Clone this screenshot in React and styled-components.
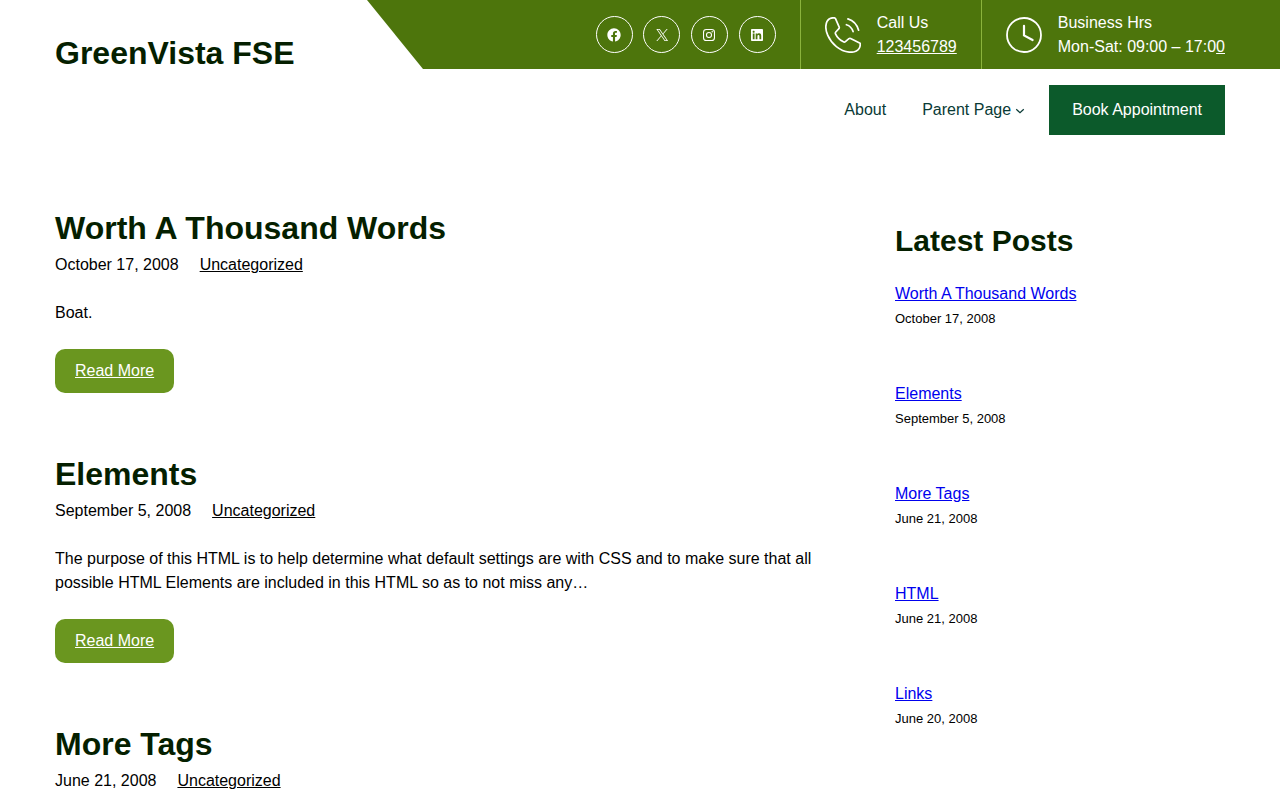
import styled, { createGlobalStyle } from 'styled-components';

const socials = ['Facebook', 'X', 'Instagram', 'LinkedIn'];

const posts = [
	{ title: 'Worth A Thousand Words', date: 'October 17, 2008', text: 'Boat.' },
	{
		title: 'Elements',
		date: 'September 5, 2008',
		text: 'The purpose of this HTML is to help determine what default settings are with CSS and to make sure that all possible HTML Elements are included in this HTML so as to not miss any…',
	},
	{ title: 'More Tags', date: 'June 21, 2008', text: '' },
];

const latest = [
	{ title: 'Worth A Thousand Words', date: 'October 17, 2008' },
	{ title: 'Elements', date: 'September 5, 2008' },
	{ title: 'More Tags', date: 'June 21, 2008' },
	{ title: 'HTML', date: 'June 21, 2008' },
	{ title: 'Links', date: 'June 20, 2008' },
];

function SocialIcon({ name }) {
	return (
		<svg width="16" height="16" viewBox="0 0 24 24" fill="currentColor" aria-hidden="true">
			{name === 'Facebook' && (
				<path d="M12 2C6.5 2 2 6.5 2 12c0 5 3.7 9.1 8.4 9.9v-7H7.9V12h2.5V9.8c0-2.5 1.5-3.9 3.8-3.9 1.1 0 2.2.2 2.2.2v2.5h-1.3c-1.2 0-1.6.8-1.6 1.6V12h2.8l-.4 2.9h-2.3v7C18.3 21.1 22 17 22 12c0-5.5-4.5-10-10-10z" />
			)}
			{name === 'X' && (
				<path d="M13.982 10.622 20.54 3h-1.554l-5.693 6.618L8.745 3H3.5l6.876 10.007L3.5 21h1.554l6.012-6.989L15.868 21h5.245l-7.131-10.378Zm-2.128 2.474-.697-.997-5.543-7.93H8l4.474 6.4.697.996 5.815 8.318h-2.387l-4.745-6.787Z" />
			)}
			{name === 'Instagram' && (
				<g>
					<rect x="3.8" y="3.8" width="16.4" height="16.4" rx="4.2" fill="none" stroke="currentColor" strokeWidth="1.6" />
					<circle cx="12" cy="12" r="3.8" fill="none" stroke="currentColor" strokeWidth="1.6" />
					<circle cx="16.8" cy="7.2" r="1.1" />
				</g>
			)}
			{name === 'LinkedIn' && (
				<path d="M19.7,3H4.3C3.582,3,3,3.582,3,4.3v15.4C3,20.418,3.582,21,4.3,21h15.4c0.718,0,1.3-0.582,1.3-1.3V4.3C21,3.582,20.418,3,19.7,3z M8.339,18.338H5.667v-8.59h2.672V18.338z M7.004,8.574c-0.857,0-1.549-0.694-1.549-1.548c0-0.855,0.691-1.548,1.549-1.548c0.854,0,1.547,0.694,1.547,1.548C8.551,7.881,7.858,8.574,7.004,8.574z M18.339,18.338h-2.669v-4.177c0-0.996-0.017-2.278-1.387-2.278c-1.389,0-1.601,1.086-1.601,2.206v4.249h-2.667v-8.59h2.559v1.174h0.037c0.356-0.675,1.227-1.387,2.526-1.387c2.703,0,3.203,1.779,3.203,4.092V18.338z" />
			)}
		</svg>
	);
}

function PhoneIcon() {
	return (
		<svg width="36" height="36" viewBox="0 0 36 36" fill="none" stroke="#fff" strokeWidth="1.7" strokeLinecap="round" strokeLinejoin="round" aria-hidden="true">
			<path d="M9.400.9C6.400.5 3.400 1.800 1.900 4.600.4 8 .6 13.400 2.800 18.400 6.600 27 14.800 34.200 24.200 35.100c4.200.4 8.200-1 10-3.700.9-1.400 1.200-3.200.9-5.200L25.600 21.500c-.6-.3-1.200-.2-1.700.2l-3.500 2.900c-.6.5-1.300.6-2 .2C14.800 23 12 20.200 10.500 16.900c-.3-.7-.2-1.300.3-1.900l3.100-3.300c.4-.5.5-1 .3-1.600L10.500 1.700C10.300 1.200 9.900 1 9.400.9z" />
			<path d="M21.400 7.700c3.200.9 5.600 3.400 6.700 6.900M22.900 1.900c5.300 1.600 9.100 5.800 10.700 11.300" />
		</svg>
	);
}

function ClockIcon() {
	return (
		<svg width="36" height="36" viewBox="0 0 36 36" fill="none" stroke="#fff" strokeWidth="1.8" strokeLinecap="round" aria-hidden="true">
			<circle cx="18" cy="18" r="17" />
			<path strokeWidth="2.2" d="M18 8.800v9.600l8.600 4.600" />
		</svg>
	);
}

function App() {
	return (
		<>
			<GlobalStyle />
			<Header>
				<SiteTitle>GreenVista FSE</SiteTitle>
				<HeaderRight>
					<TopBar>
						<Socials>
							{socials.map((name) => (
								<SocialLink key={name} href="#" aria-label={name}>
									<SocialIcon name={name} />
								</SocialLink>
							))}
						</Socials>
						<Contact>
							<PhoneIcon />
							<div>
								<p>Call Us</p>
								<a href="#">123456789</a>
							</div>
						</Contact>
						<Contact>
							<ClockIcon />
							<div>
								<p>Business Hrs</p>
								<p>
									Mon-Sat: 09:00 – 17:0<a href="#">0</a>
								</p>
							</div>
						</Contact>
					</TopBar>
					<Nav>
						<NavLink href="#">About</NavLink>
						<Submenu>
							<NavLink href="#">Parent Page</NavLink>
							<Toggle aria-label="Parent Page submenu">
								<svg width="10" height="10" viewBox="0 0 12 12" fill="none" stroke="currentColor" strokeWidth="1.5">
									<path d="M1.500 4 6 8l4.500-4" />
								</svg>
							</Toggle>
						</Submenu>
						<Book href="#">Book Appointment</Book>
					</Nav>
				</HeaderRight>
			</Header>
			<Content>
				<Posts>
					{posts.map((post) => (
						<article key={post.title}>
							<PostTitle>{post.title}</PostTitle>
							<Meta>
								<span>{post.date}</span>
								<a href="#">Uncategorized</a>
							</Meta>
							{post.text && (
								<>
									<Excerpt>{post.text}</Excerpt>
									<ReadMore href="#">Read More</ReadMore>
								</>
							)}
						</article>
					))}
				</Posts>
				<Sidebar>
					<SideTitle>Latest Posts</SideTitle>
					<LatestList>
						{latest.map((item) => (
							<li key={item.title}>
								<LatestLink href="#">{item.title}</LatestLink>
								<LatestDate>{item.date}</LatestDate>
							</li>
						))}
					</LatestList>
				</Sidebar>
			</Content>
		</>
	);
}

const GlobalStyle = createGlobalStyle`
	* {
		box-sizing: border-box;
	}
	body {
		margin: 0;
		background: #fff;
		color: #000;
		font-family: 'Liberation Sans', Arial, sans-serif;
		font-size: 16px;
		line-height: 24px;
	}
	html {
		scrollbar-width: none;
	}
	h1, h2, p, ul {
		margin: 0;
		padding: 0;
	}
	a {
		color: inherit;
	}
`;

const Header = styled.header`
	display: grid;
	grid-template-columns: 312px 1fr;
	padding-left: 55px;
`;

const SiteTitle = styled.h1`
	color: #051f00;
	font-size: 32px;
	line-height: 38px;
	padding-top: 34px;
`;

const HeaderRight = styled.div`
	display: flex;
	flex-direction: column;
`;

const TopBar = styled.div`
	display: flex;
	justify-content: flex-end;
	height: 69px;
	padding-right: 31px;
	background: #4d750c;
	color: #fff;
	clip-path: polygon(0 0, 100% 0, 100% 100%, 56px 100%);
`;

const Socials = styled.div`
	display: flex;
	align-items: center;
	justify-content: space-between;
	width: 180px;
	margin-right: 24px;
`;

const SocialLink = styled.a`
	display: flex;
	align-items: center;
	justify-content: center;
	width: 37px;
	height: 37px;
	border: 1px solid #fff;
	border-radius: 50%;
`;

const Contact = styled.div`
	display: flex;
	align-items: center;
	gap: 16px;
	padding: 0 24px;
	border-left: 1px solid #8bb33c;
`;

const Nav = styled.nav`
	display: flex;
	align-items: center;
	justify-content: flex-end;
	padding: 16px 55px 0 0;
`;

const NavLink = styled.a`
	color: #093a35;
	text-decoration: none;
`;

const Submenu = styled.div`
	display: flex;
	align-items: center;
	margin: 0 24px 0 36px;
`;

const Toggle = styled.button`
	display: flex;
	padding: 2px 0 0;
	margin-left: 4px;
	border: 0;
	background: none;
	color: #093a35;
`;

const Book = styled.a`
	padding: 13px 23px;
	background: #0c5a2b;
	color: #fff;
	text-decoration: none;
`;

const Content = styled.main`
	display: grid;
	grid-template-columns: 780fr 330fr;
	column-gap: 60px;
	padding: 73px 55px 60px;
`;

const Posts = styled.div`
	display: flex;
	flex-direction: column;
	gap: 61px;
`;

const PostTitle = styled.h2`
	color: #051f00;
	font-size: 32px;
	line-height: 40px;
	margin-bottom: 5px;
`;

const Meta = styled.div`
	display: flex;
	gap: 21px;
`;

const Excerpt = styled.p`
	margin: 24px 0;
`;

const ReadMore = styled.a`
	display: block;
	width: fit-content;
	padding: 10px 20px;
	border-radius: 10px;
	background: #6a961f;
	color: #fff;
`;

const Sidebar = styled.aside`
	padding-top: 15px;
`;

const SideTitle = styled.h2`
	color: #051f00;
	font-size: 30px;
	line-height: 36px;
	margin-bottom: 23px;
`;

const LatestList = styled.ul`
	display: grid;
	gap: 50px;
	list-style: none;
`;

const LatestLink = styled.a`
	display: block;
	width: fit-content;
	color: #0000ee;
`;

const LatestDate = styled.time`
	display: block;
	font-size: 13px;
	line-height: 26px;
`;

export default App;
